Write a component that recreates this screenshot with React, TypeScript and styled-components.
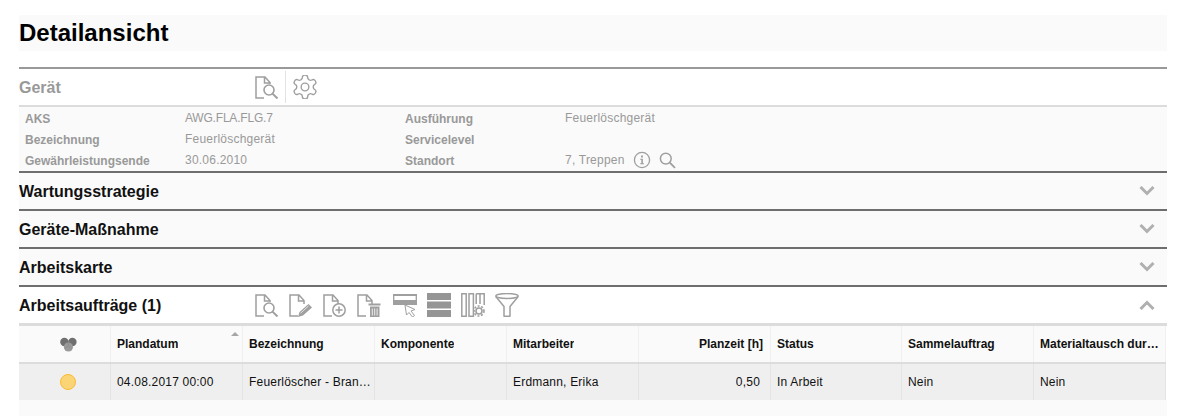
import React from "react";
import styled, { createGlobalStyle } from "styled-components";

const Global = createGlobalStyle`
  html, body { margin: 0; padding: 0; background: #fff; }
  body { font-family: "Liberation Sans", Arial, sans-serif; }
`;

const Page = styled.div`
  width: 1148px;
  height: 416px;
  margin-left: 19px;
  padding-top: 15px;
  box-sizing: border-box;
  overflow: hidden;
  display: flex;
  flex-direction: column;
`;

const TitleBand = styled.div`
  height: 36px;
  flex: none;
  margin-bottom: 16px;
  background: #fafafa;
  display: flex;
  align-items: center;
`;

const PageTitle = styled.h1`
  margin: 0;
  font-size: 24px;
  font-weight: 700;
  line-height: 36px;
  color: #000;
`;

const SectionHeader = styled.div<{ $open?: boolean; $muted?: boolean }>`
  height: 36px;
  flex: none;
  border-top: 2px solid ${(p) => (p.$muted ? "#999" : "#6e6e6e")};
  background: ${(p) => (p.$open ? "#fff" : "#fafafa")};
  display: flex;
  align-items: center;
  position: relative;
`;

const SectionTitle = styled.div<{ $muted?: boolean }>`
  width: 236px;
  flex: none;
  padding-top: 2px;
  font-size: 16px;
  font-weight: 700;
  color: ${(p) => (p.$muted ? "#999" : "#111")};
`;

const Toolbar = styled.div`
  display: flex;
  align-items: center;
  gap: 10px;
  height: 32px;
`;

const ToolGroup = styled.div`
  display: flex;
  align-items: center;
  gap: 10px;
  margin-left: 2px;
`;

const DividedTool = styled.div`
  height: 32px;
  display: flex;
  align-items: center;
  padding-right: 6px;
  margin-right: -3px;
  border-right: 1px solid #e2e2e2;
`;

const Chevron = styled.svg`
  margin-left: auto;
  margin-right: 12px;
  flex: none;
`;

const Details = styled.div`
  height: 64px;
  flex: none;
  border-top: 2px solid #dcdcdc;
  background: #fafafa;
  display: grid;
  grid-template-columns: 380px 1fr;
  padding-left: 6px;
`;

const DetailColumn = styled.div`
  display: flex;
  flex-direction: column;
  padding-top: 1px;
`;

const DetailRow = styled.div`
  height: 21px;
  display: flex;
  align-items: center;
  font-size: 12px;
  color: #999;
`;

const DetailLabel = styled.div`
  width: 160px;
  flex: none;
  font-weight: 700;
  padding-top: 1px;
`;

const DetailValue = styled.div<{ $tight?: boolean }>`
  display: flex;
  align-items: center;
  gap: 8px;
  padding-bottom: 1px;
  letter-spacing: ${(p) => (p.$tight ? "-0.2px" : "0.22px")};
`;

const TableWrap = styled.div`
  border-top: 3px solid #dcdcdc;
  flex: none;
`;

const Row = styled.div<{ $head?: boolean }>`
  display: grid;
  grid-template-columns: 92px 132px 132px 132px 132px 132px 131px 132px 132px;
  height: 36px;
  width: 1147px;
  background: ${(p) => (p.$head ? "#fafafa" : "#efefef")};
  border-bottom: ${(p) => (p.$head ? "2px solid #dcdcdc" : "none")};
`;

const IconCell = styled.div<{ $head?: boolean }>`
  display: flex;
  align-items: center;
  justify-content: center;
  padding-left: 7px;
  box-sizing: border-box;
  border-right: 1px solid ${(p) => (p.$head ? "#f0f0f0" : "#e4e4e4")};
`;

const Cell = styled.div<{ $head?: boolean; $right?: boolean }>`
  display: flex;
  align-items: center;
  justify-content: ${(p) => (p.$right ? "flex-end" : "flex-start")};
  padding: 0 ${(p) => (p.$right ? (p.$head ? "7px" : "10px") : p.$head ? "6px" : "2px")} 0 6px;
  box-sizing: border-box;
  min-width: 0;
  font-size: 12px;
  font-weight: ${(p) => (p.$head ? 700 : 400)};
  letter-spacing: ${(p) => (p.$head ? "0" : "0.2px")};
  color: #111;
  border-right: 1px solid ${(p) => (p.$head ? "#f0f0f0" : "#e4e4e4")};
  position: relative;
`;

const CellText = styled.span`
  overflow: hidden;
  white-space: nowrap;
  text-overflow: ellipsis;
  min-width: 0;
`;

const SortMark = styled.div`
  position: absolute;
  right: 3px;
  top: 6px;
  width: 0;
  height: 0;
  border-left: 4px solid transparent;
  border-right: 4px solid transparent;
  border-bottom: 4px solid #a6a6a6;
`;

const StatusDot = styled.div`
  width: 16px;
  height: 16px;
  box-sizing: border-box;
  border-radius: 50%;
  background: #fbd476;
  border: 1px solid #fbb931;
`;

const Filler = styled.div`
  flex: 1;
  background: #fafafa;
`;

const ICON = "#9f9f9f";

const Doc = ({ d }: { d: string }) => (
  <path d={d} fill="none" stroke={ICON} strokeWidth="1.5" />
);

const DOC_SEARCH = "M15 9V7.5L10 2H1V23H9M9.5 2V8H15";
const DOC_OPEN = "M15 11V7.5L10 2H1V23H9M9.5 2V8H15";

const Svg = ({ children }: { children: React.ReactNode }) => (
  <svg width="24" height="24" viewBox="0 0 24 24">{children}</svg>
);

const DocSearch = () => (
  <Svg>
    <Doc d={DOC_SEARCH} />
    <circle cx="14" cy="15" r="5" fill="#fff" stroke={ICON} strokeWidth="1.6" />
    <path d="M17.5 18.6L22.5 23.5" stroke={ICON} strokeWidth="2" />
  </Svg>
);

const DocEdit = () => (
  <Svg>
    <Doc d={DOC_OPEN} />
    <path d="M9 24L10.5 19L19.5 11L23 14.5L14 22.5Z" fill={ICON} />
    <path d="M11.5 20.2L19.5 13" stroke="#fff" strokeWidth="0.7" />
  </Svg>
);

const DocAdd = () => (
  <Svg>
    <Doc d={DOC_OPEN} />
    <circle cx="16" cy="17" r="6.2" fill="#fff" stroke={ICON} strokeWidth="1.5" />
    <path d="M16 13.5V20.5M12.5 17H19.5" stroke={ICON} strokeWidth="1.5" />
  </Svg>
);

const DocTrash = () => (
  <Svg>
    <Doc d={DOC_OPEN} />
    <path d="M11.5 10.5H23.5V12.5H11.5Z" fill={ICON} />
    <path d="M13 13.5H22.5V24H13Z" fill={ICON} />
    <path d="M15.3 15.5V22.5M17.7 15.5V22.5M20.1 15.5V22.5" stroke="#fff" strokeWidth="0.8" />
  </Svg>
);

const RowPick = () => (
  <Svg>
    <path d="M0 1H24V3H0ZM0 7H24V12H0Z" fill={ICON} />
    <path d="M0.7 1V12M23.3 1V12" stroke={ICON} strokeWidth="1.3" />
    <path d="M12 12L22 16.5L18 18L21.5 22.5L19.5 24L16 19.5L13.5 22Z" fill="#fff" stroke={ICON} strokeWidth="1" />
  </Svg>
);

const Rows = () => (
  <Svg>
    <path d="M0 0H24V7H0ZM0 8.5H24V15.5H0ZM0 17H24V24H0Z" fill="#959595" />
  </Svg>
);

const ColumnsGear = () => (
  <Svg>
    <path d="M0.8 0.8H5.2V23.2H0.8ZM8 0.8H12.4V23.2H8Z" fill="none" stroke={ICON} strokeWidth="1.5" />
    <path d="M15.2 0.8H19V11M19 0.8H23.2V12M15.2 0.8V11" fill="none" stroke={ICON} strokeWidth="1.5" />
    <circle cx="18" cy="18" r="3" fill="none" stroke={ICON} strokeWidth="1.6" />
    <circle cx="18" cy="18" r="5" fill="none" stroke={ICON} strokeWidth="1.6" strokeDasharray="2 1.6" />
  </Svg>
);

const Funnel = () => (
  <Svg>
    <ellipse cx="12" cy="3" rx="11.2" ry="2.4" fill="none" stroke={ICON} strokeWidth="1.5" />
    <path d="M0.8 3.5L9 13.5V23.2H15V13.5L23.2 3.5" fill="none" stroke={ICON} strokeWidth="1.5" strokeLinejoin="round" />
  </Svg>
);

const Gear = () => (
  <svg width="24" height="24" viewBox="2 2 20 20" fill="none" stroke={ICON} strokeWidth="1.15" strokeLinecap="round" strokeLinejoin="round">
    <path d="M12.22 2h-.44a2 2 0 0 0-2 2v.18a2 2 0 0 1-1 1.73l-.43.25a2 2 0 0 1-2 0l-.15-.08a2 2 0 0 0-2.73.73l-.22.38a2 2 0 0 0 .73 2.73l.15.1a2 2 0 0 1 1 1.72v.51a2 2 0 0 1-1 1.74l-.15.09a2 2 0 0 0-.73 2.73l.22.38a2 2 0 0 0 2.73.73l.15-.08a2 2 0 0 1 2 0l.43.25a2 2 0 0 1 1 1.73V20a2 2 0 0 0 2 2h.44a2 2 0 0 0 2-2v-.18a2 2 0 0 1 1-1.73l.43-.25a2 2 0 0 1 2 0l.15.08a2 2 0 0 0 2.73-.73l.22-.39a2 2 0 0 0-.73-2.73l-.15-.08a2 2 0 0 1-1-1.74v-.5a2 2 0 0 1 1-1.74l.15-.09a2 2 0 0 0 .73-2.73l-.22-.38a2 2 0 0 0-2.73-.73l-.15.08a2 2 0 0 1-2 0l-.43-.25a2 2 0 0 1-1-1.73V4a2 2 0 0 0-2-2z" />
    <circle cx="12" cy="12" r="3.2" />
  </svg>
);

const Info = () => (
  <svg width="18" height="18" viewBox="0 0 18 18">
    <circle cx="9" cy="9" r="7.6" fill="none" stroke={ICON} strokeWidth="1.3" />
    <path d="M8 4.6H9.9V6.4H8ZM7.2 7.8H9.9V12.2H11V13.2H7.2V12.2H8.3V8.8H7.2Z" fill={ICON} />
  </svg>
);

const Search = () => (
  <svg width="17" height="17" viewBox="0 0 17 17">
    <circle cx="6.8" cy="6.6" r="5.4" fill="none" stroke={ICON} strokeWidth="1.5" />
    <path d="M10.8 10.6L16 15.8" stroke={ICON} strokeWidth="1.8" />
  </svg>
);

const Cluster = () => (
  <svg width="17" height="15" viewBox="0 0 17 15">
    <circle cx="4.4" cy="5" r="4.2" fill="#707070" />
    <circle cx="12.4" cy="5" r="4.2" fill="#707070" />
    <circle cx="8.4" cy="10" r="4.6" fill="#9a9a9a" />
    <path d="M8.4 5.4V9M5 11.2L8.4 9L11.8 11.2" stroke="#8a8a8a" strokeWidth="0.6" fill="none" />
  </svg>
);

const Down = () => (
  <Chevron width="16" height="10" viewBox="0 0 16 10">
    <path d="M1.5 1L8 7.5L14.5 1" fill="none" stroke="#b0b0b0" strokeWidth="3" />
  </Chevron>
);

const Up = () => (
  <Chevron width="16" height="10" viewBox="0 0 16 10">
    <path d="M1.5 9L8 2.5L14.5 9" fill="none" stroke="#b0b0b0" strokeWidth="3" />
  </Chevron>
);

const left = [
  ["AKS", "AWG.FLA.FLG.7"],
  ["Bezeichnung", "Feuerlöschgerät"],
  ["Gewährleistungsende", "30.06.2010"],
];

const heads = ["Plandatum", "Bezeichnung", "Komponente", "Mitarbeiter", "Planzeit [h]", "Status", "Sammelauftrag", "Materialtausch durchgeführt"];
const vals = ["04.08.2017 00:00", "Feuerlöscher - Brandschutz", "", "Erdmann, Erika", "0,50", "In Arbeit", "Nein", "Nein"];

export default function App() {
  return (
    <Page>
      <Global />
      <TitleBand>
        <PageTitle>Detailansicht</PageTitle>
      </TitleBand>

      <SectionHeader $open $muted>
        <SectionTitle $muted>Gerät</SectionTitle>
        <Toolbar>
          <DividedTool><DocSearch /></DividedTool>
          <Gear />
        </Toolbar>
      </SectionHeader>
      <Details>
        <DetailColumn>
          {left.map(([l, v]) => (
            <DetailRow key={l}>
              <DetailLabel>{l}</DetailLabel>
              <DetailValue $tight={l === "AKS"}>{v}</DetailValue>
            </DetailRow>
          ))}
        </DetailColumn>
        <DetailColumn>
          <DetailRow>
            <DetailLabel>Ausführung</DetailLabel>
            <DetailValue>Feuerlöschgerät</DetailValue>
          </DetailRow>
          <DetailRow>
            <DetailLabel>Servicelevel</DetailLabel>
          </DetailRow>
          <DetailRow>
            <DetailLabel>Standort</DetailLabel>
            <DetailValue>7, Treppen <Info /> <Search /></DetailValue>
          </DetailRow>
        </DetailColumn>
      </Details>

      <SectionHeader><SectionTitle>Wartungsstrategie</SectionTitle><Down /></SectionHeader>
      <SectionHeader><SectionTitle>Geräte-Maßnahme</SectionTitle><Down /></SectionHeader>
      <SectionHeader><SectionTitle>Arbeitskarte</SectionTitle><Down /></SectionHeader>

      <SectionHeader $open>
        <SectionTitle>Arbeitsaufträge (1)</SectionTitle>
        <Toolbar>
          <DocSearch />
          <DocEdit />
          <DocAdd />
          <DocTrash />
          <ToolGroup>
            <RowPick />
            <Rows />
            <ColumnsGear />
            <Funnel />
          </ToolGroup>
        </Toolbar>
        <Up />
      </SectionHeader>

      <TableWrap>
        <Row $head>
          <IconCell $head><Cluster /></IconCell>
          {heads.map((h, i) => (
            <Cell $head $right={i === 4} key={h}>
              <CellText>{h}</CellText>
              {i === 0 && <SortMark />}
            </Cell>
          ))}
        </Row>
        <Row>
          <IconCell><StatusDot /></IconCell>
          {vals.map((v, i) => (
            <Cell $right={i === 4} key={i}>
              <CellText>{v}</CellText>
            </Cell>
          ))}
        </Row>
      </TableWrap>
      <Filler />
    </Page>
  );
}
